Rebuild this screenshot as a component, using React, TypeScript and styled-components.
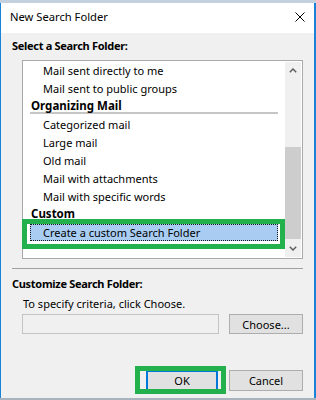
import React from 'react';
import styled, { createGlobalStyle } from 'styled-components';

const uiFont = `'Noto Sans', 'Open Sans', Arial, sans-serif`;

const GlobalStyle = createGlobalStyle`
  html, body {
    margin: 0;
    padding: 0;
    background: #f0f0f0;
  }
  body {
    font-family: ${uiFont};
    font-size: 11px;
    color: #000;
  }
  * {
    box-sizing: border-box;
  }
`;

const Screen = styled.div`
  width: 316px;
  height: 400px;
  display: flex;
  flex-direction: column;
  overflow: hidden;
`;

const TopEdge = styled.div`
  height: 3px;
  flex-shrink: 0;
  background: #c5d0de;
`;

const BottomEdge = styled.div`
  height: 2px;
  flex-shrink: 0;
  background: #a9b3be;
`;

const Window = styled.div`
  flex: 1;
  display: flex;
  flex-direction: column;
  background: #f0f0f0;
  border-left: 1px solid #1883d7;
  border-right: 2px solid #1883d7;
`;

const TitleBar = styled.div`
  height: 30px;
  flex-shrink: 0;
  display: flex;
  align-items: center;
  justify-content: space-between;
  padding: 0 9px 2px 9px;
  background: #fff;
`;

const Title = styled.div`
  font-size: 11.2px;
  line-height: 16px;
`;

const CloseIcon = styled.svg`
  width: 10px;
  height: 10px;
  display: block;
`;

const Body = styled.div`
  flex: 1;
  display: flex;
  flex-direction: column;
  padding: 0 11px;
`;

const SectionTitle = styled.div<{ $top: number }>`
  margin-top: ${(p) => p.$top}px;
  font-weight: 700;
  letter-spacing: -0.3px;
  line-height: 16px;
`;

const ListBox = styled.div`
  margin: 6px 0 0 10px;
  height: 199px;
  display: flex;
  padding: 1px;
  background: #fff;
  border: 1px solid #a9a9a9;
`;

const ListContent = styled.div`
  flex: 1;
  padding: 0 7px 0 6px;
`;

const GroupHeader = styled.div`
  height: 18px;
  padding-top: 1px;
  font-size: 11.5px;
  font-weight: 700;
  line-height: 13px;
  text-indent: 1px;
  white-space: nowrap;

  &::after {
    content: '';
    display: block;
    height: 2px;
    background: #c6c6c6;
  }
`;

const Item = styled.div<{ $selected?: boolean }>`
  position: relative;
  height: ${(p) => (p.$selected ? 17 : 18)}px;
  margin-bottom: ${(p) => (p.$selected ? 1 : 0)}px;
  padding-left: ${(p) => (p.$selected ? 12 : 13)}px;
  line-height: ${(p) => (p.$selected ? 15 : 18)}px;
  white-space: nowrap;
  background: ${(p) => (p.$selected ? '#a9cdf2' : 'transparent')};
  border: ${(p) => (p.$selected ? '1px dotted #1a1a1a' : 'none')};
`;

const Highlight = styled.div<{ $top: number; $right: number; $bottom: number; $left: number }>`
  position: absolute;
  top: ${(p) => p.$top}px;
  right: ${(p) => p.$right}px;
  bottom: ${(p) => p.$bottom}px;
  left: ${(p) => p.$left}px;
  border: 5px solid #22b14c;
  pointer-events: none;
`;

const ScrollBar = styled.div`
  width: 16px;
  display: flex;
  flex-direction: column;
  background: #f0f0f0;
`;

const ScrollArrow = styled.div`
  height: 17px;
  flex-shrink: 0;
  display: flex;
  align-items: center;
  justify-content: center;
`;

const ScrollTrack = styled.div`
  flex: 1;
`;

const ScrollThumb = styled.div<{ $offset: number; $size: number }>`
  margin-top: ${(p) => p.$offset}px;
  height: ${(p) => p.$size}px;
  background: #cdcdcd;
`;

const Rule = styled.div`
  margin-top: 9px;
  height: 1px;
  background: #a0a0a0;
`;

const Hint = styled.div`
  margin-top: 4px;
  padding-left: 11px;
  line-height: 16px;
`;

const CriteriaRow = styled.div`
  margin-top: 2px;
  display: flex;
  align-items: center;
  justify-content: space-between;
`;

const CriteriaInput = styled.div`
  margin-left: 10px;
  width: 197px;
  height: 20px;
  background: #f0f0f0;
  border: 1px solid #c4c4c4;
`;

const Footer = styled.div`
  margin-top: 36px;
  display: flex;
  justify-content: flex-end;
  gap: 11px;
`;

const Button = styled.div<{ $width: number; $height?: number; $default?: boolean }>`
  position: relative;
  width: ${(p) => p.$width}px;
  height: ${(p) => p.$height ?? 21}px;
  display: flex;
  align-items: center;
  justify-content: center;
  background: #e1e1e1;
  border: ${(p) => (p.$default ? '2px solid #0078d7' : '1px solid #adadad')};
  line-height: 1;
`;

const Chevron = ({ down }: { down?: boolean }) => (
  <svg width="8" height="5" viewBox="0 0 8 5">
    <polyline
      points={down ? '0.8,0.8 4,4 7.2,0.8' : '0.8,4.2 4,1 7.2,4.2'}
      fill="none"
      stroke="#606060"
      strokeWidth="1.5"
    />
  </svg>
);

export default function App() {
  return (
    <Screen>
      <GlobalStyle />
      <TopEdge />
      <Window>
        <TitleBar>
          <Title>New Search Folder</Title>
          <CloseIcon viewBox="0 0 10 10">
            <path d="M0.5 0.5 L9.5 9.5 M9.5 0.5 L0.5 9.5" stroke="#000" strokeWidth="1" />
          </CloseIcon>
        </TitleBar>

        <Body>
          <SectionTitle $top={5}>Select a Search Folder:</SectionTitle>

          <ListBox>
            <ListContent>
              <Item>Mail sent directly to me</Item>
              <Item>Mail sent to public groups</Item>
              <GroupHeader>Organizing Mail</GroupHeader>
              <Item>Categorized mail</Item>
              <Item>Large mail</Item>
              <Item>Old mail</Item>
              <Item>Mail with attachments</Item>
              <Item>Mail with specific words</Item>
              <GroupHeader>Custom</GroupHeader>
              <Item $selected>
                Create a custom Search Folder
                <Highlight $top={-6} $right={-8} $bottom={-9} $left={-9} />
              </Item>
            </ListContent>
            <ScrollBar>
              <ScrollArrow>
                <Chevron />
              </ScrollArrow>
              <ScrollTrack>
                <ScrollThumb $offset={68} $size={92} />
              </ScrollTrack>
              <ScrollArrow>
                <Chevron down />
              </ScrollArrow>
            </ScrollBar>
          </ListBox>

          <Rule />

          <SectionTitle $top={7}>Customize Search Folder:</SectionTitle>
          <Hint>To specify criteria, click Choose.</Hint>
          <CriteriaRow>
            <CriteriaInput />
            <Button $width={74} $height={20}>
              Choose...
            </Button>
          </CriteriaRow>

          <Footer>
            <Button $width={72} $default>
              OK
              <Highlight $top={-6} $right={-10} $bottom={-5} $left={-13} />
            </Button>
            <Button $width={74}>Cancel</Button>
          </Footer>
        </Body>
      </Window>
      <BottomEdge />
    </Screen>
  );
}
